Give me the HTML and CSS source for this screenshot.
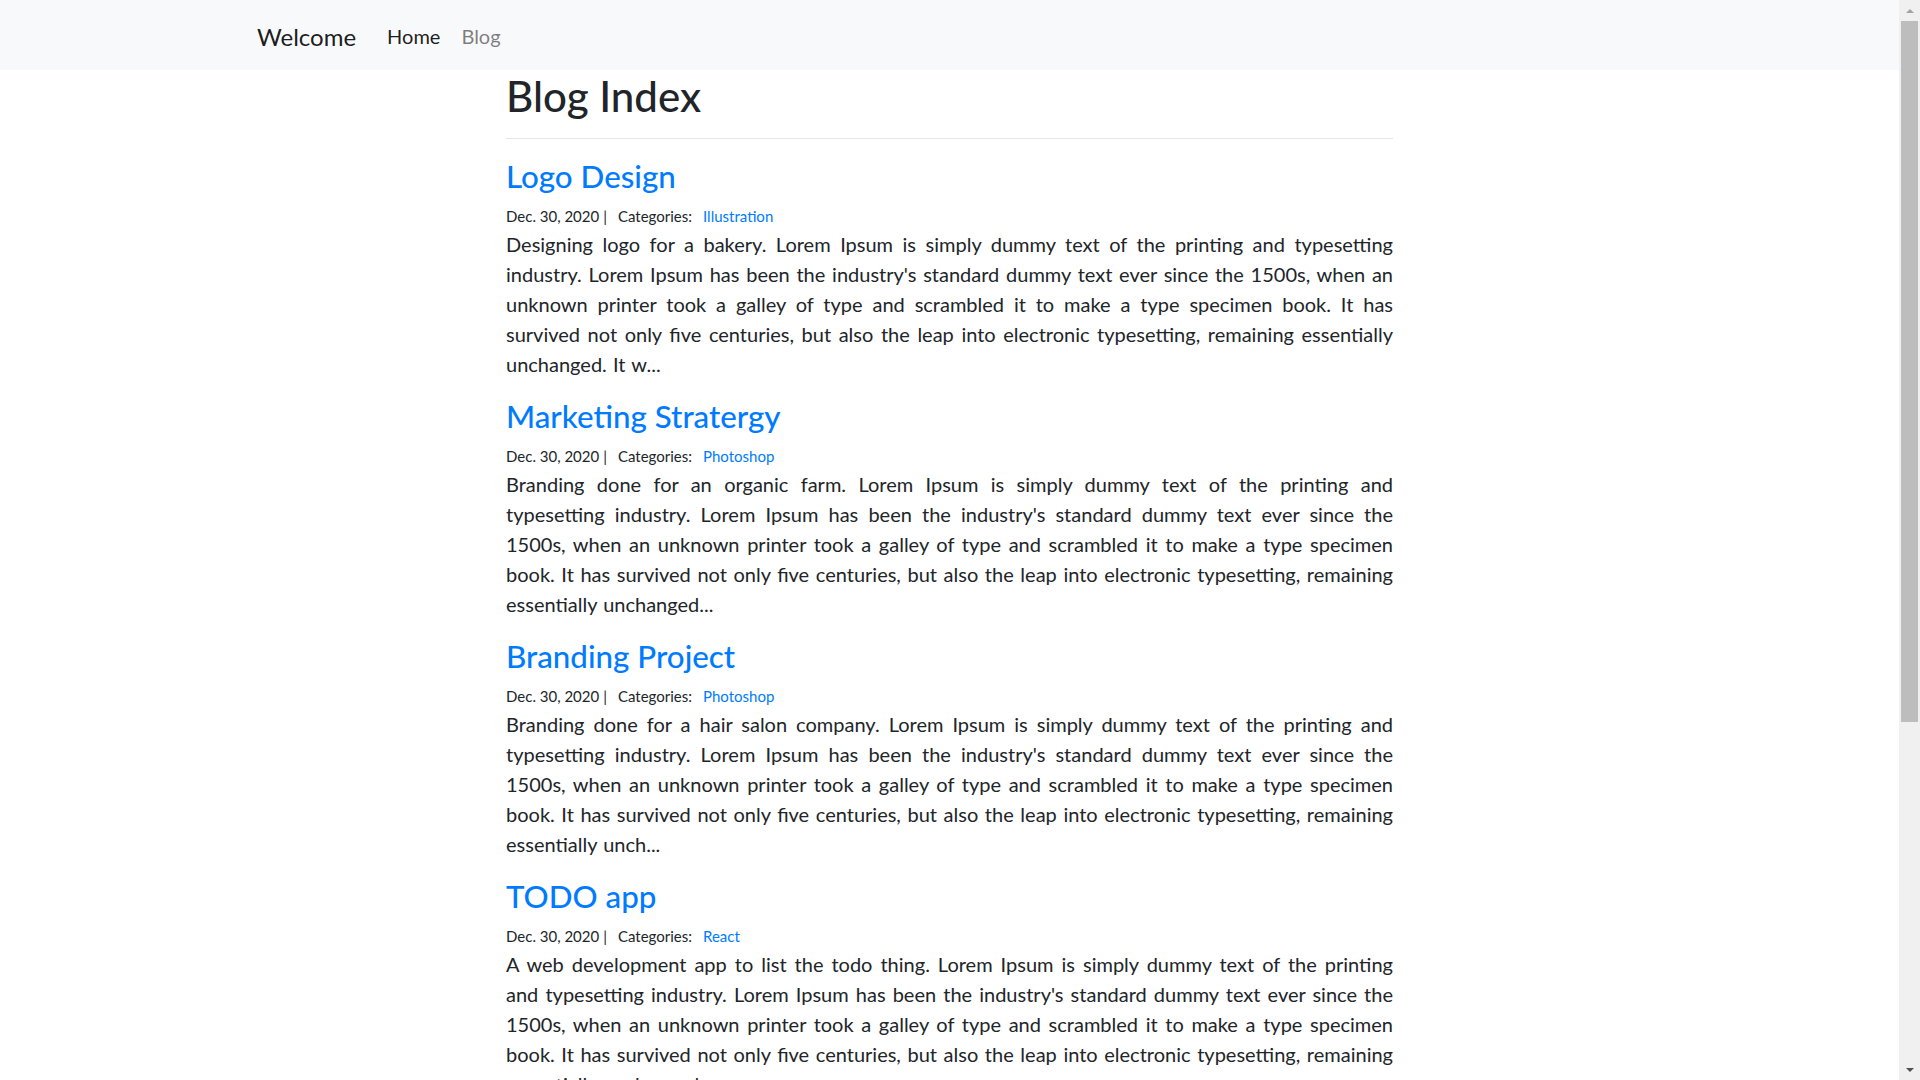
FILE: index.html
```html
<!DOCTYPE html>
<html lang="en">
<head>
<meta charset="utf-8">
<title>Blog Index</title>
<link rel="stylesheet" href="styles.css">
</head>
<body>
<nav class="navbar">
  <div class="navbar-inner">
    <a class="brand" href="#">Welcome</a>
    <ul class="nav-links">
      <li><a class="nav-link active" href="#">Home</a></li>
      <li><a class="nav-link" href="#">Blog</a></li>
    </ul>
  </div>
</nav>
<main class="page">
  <div class="content">
    <h1 class="page-title">Blog Index</h1>
    <hr class="divider">

    <article class="post">
      <h2 class="post-title"><a href="#">Logo Design</a></h2>
      <div class="post-meta">Dec. 30, 2020<span class="sep">|</span>Categories:<a href="#" class="cat">Illustration</a></div>
      <p class="post-body">Designing logo for a bakery. Lorem Ipsum is simply dummy text of the printing and typesetting industry. Lorem Ipsum has been the industry's standard dummy text ever since the 1500s, when an unknown printer took a galley of type and scrambled it to make a type specimen book. It has survived not only five centuries, but also the leap into electronic typesetting, remaining essentially unchanged. It w...</p>
    </article>

    <article class="post">
      <h2 class="post-title"><a href="#">Marketing Stratergy</a></h2>
      <div class="post-meta">Dec. 30, 2020<span class="sep">|</span>Categories:<a href="#" class="cat">Photoshop</a></div>
      <p class="post-body">Branding done for an organic farm. Lorem Ipsum is simply dummy text of the printing and typesetting industry. Lorem Ipsum has been the industry's standard dummy text ever since the 1500s, when an unknown printer took a galley of type and scrambled it to make a type specimen book. It has survived not only five centuries, but also the leap into electronic typesetting, remaining essentially unchanged...</p>
    </article>

    <article class="post">
      <h2 class="post-title"><a href="#">Branding Project</a></h2>
      <div class="post-meta">Dec. 30, 2020<span class="sep">|</span>Categories:<a href="#" class="cat">Photoshop</a></div>
      <p class="post-body">Branding done for a hair salon company. Lorem Ipsum is simply dummy text of the printing and typesetting industry. Lorem Ipsum has been the industry's standard dummy text ever since the 1500s, when an unknown printer took a galley of type and scrambled it to make a type specimen book. It has survived not only five centuries, but also the leap into electronic typesetting, remaining essentially unch...</p>
    </article>

    <article class="post">
      <h2 class="post-title"><a href="#">TODO app</a></h2>
      <div class="post-meta">Dec. 30, 2020<span class="sep">|</span>Categories:<a href="#" class="cat">React</a></div>
      <p class="post-body">A web development app to list the todo thing. Lorem Ipsum is simply dummy text of the printing and typesetting industry. Lorem Ipsum has been the industry's standard dummy text ever since the 1500s, when an unknown printer took a galley of type and scrambled it to make a type specimen book. It has survived not only five centuries, but also the leap into electronic typesetting, remaining essentially unchanged...</p>
    </article>
  </div>
</main>
<div class="scrollbar" aria-hidden="true">
  <span class="sb-arrow sb-up"></span>
  <span class="sb-thumb"></span>
  <span class="sb-arrow sb-down"></span>
</div>
</body>
</html>
```
FILE: styles.css
```css
* { box-sizing: border-box; }

html, body {
  margin: 0;
  padding: 0;
}

body {
  font-family: "Segoe UI", Lato, "Open Sans", Arial, sans-serif;
  color: #212529;
  background: #fff;
  font-size: 16px;
  line-height: 1.5;
  margin-right: 21px;
}

a { text-decoration: none; color: #007bff; }

.navbar {
  background: #f8f9fa;
  height: 70px;
}

.navbar-inner {
  display: flex;
  align-items: center;
  height: 100%;
  padding-left: 257px;
}

.brand {
  font-size: 24px;
  line-height: 1;
  color: rgba(0, 0, 0, 0.9);
  margin-right: 31px;
  padding-top: 4px;
}

.nav-links {
  display: flex;
  list-style: none;
  margin: 5px 0 0;
  padding: 0;
  gap: 21px;
}

.nav-link {
  font-size: 20px;
  line-height: 1;
  color: rgba(0, 0, 0, 0.5);
}

.nav-link.active { color: rgba(0, 0, 0, 0.9); }

.page {
  display: flex;
  justify-content: center;
}

.content {
  width: 887px;
}

.page-title {
  font-size: 42px;
  font-weight: 500;
  line-height: 48px;
  margin: 2px 0 0;
}

.divider {
  border: 0;
  border-top: 1px solid rgba(0, 0, 0, 0.1);
  margin: 18px 0 18px;
}

.post-title {
  font-size: 31.3px;
  font-weight: 500;
  line-height: 38px;
  margin: 0 0 9px;
}

.post-meta {
  font-size: 15px;
  line-height: 24px;
  margin: 0 0 1px;
}

.sep { margin: 0 11px 0 4px; }

.cat { margin-left: 11px; }

.post-body {
  font-size: 20px;
  line-height: 30px;
  word-spacing: 1.05px;
  text-align: justify;
  margin: 0 0 18px;
}

.scrollbar {
  position: fixed;
  top: 0;
  right: 0;
  width: 21px;
  height: 100vh;
  background: #f0f0f0;
  display: flex;
  flex-direction: column;
  align-items: center;
}

.sb-arrow {
  width: 0;
  height: 0;
  border-left: 4px solid transparent;
  border-right: 4px solid transparent;
  flex: none;
}

.sb-up {
  border-bottom: 4px solid #a3a3a3;
  margin: 9px 0 8px;
}

.sb-thumb {
  width: 17px;
  height: 701px;
  background: #bdbdbd;
  flex: none;
}

.sb-down {
  border-top: 4px solid #505050;
  margin-top: auto;
  margin-bottom: 8px;
}
```
